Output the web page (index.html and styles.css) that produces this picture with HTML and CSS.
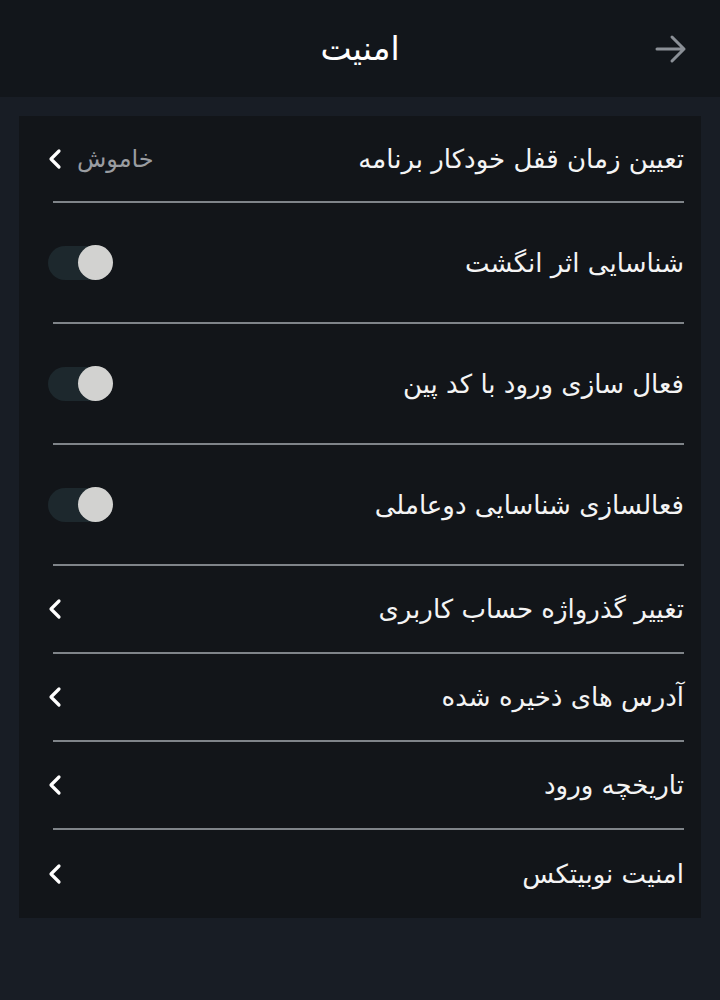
FILE: index.html
```html
<!DOCTYPE html>
<html lang="fa" dir="rtl">
<head>
<meta charset="utf-8">
<link rel="stylesheet" href="styles.css">
</head>
<body>
<header class="topbar">
  <h1 class="title">امنیت</h1>
  <span class="back">
    <svg width="32" height="30" viewBox="0 0 32 30"><path d="M2 15H29M17 3L29 15L17 27" fill="none" stroke="#8b9097" stroke-width="3" stroke-linecap="round" stroke-linejoin="round"/></svg>
  </span>
</header>
<main class="content">
  <section class="card">
    <div class="row nav">
      <span class="label">تعیین زمان قفل خودکار برنامه</span>
      <span class="end"><span class="value">خاموش</span><span class="chev"><svg width="14" height="22" viewBox="0 0 14 22"><path d="M11 3L3 11L11 19" fill="none" stroke="#fff" stroke-width="3.2" stroke-linecap="round" stroke-linejoin="round"/></svg></span></span>
    </div>
    <div class="row tall">
      <span class="label">شناسایی اثر انگشت</span>
      <span class="toggle"><span class="knob"></span></span>
    </div>
    <div class="row tall">
      <span class="label">فعال سازی ورود با کد پین</span>
      <span class="toggle"><span class="knob"></span></span>
    </div>
    <div class="row tall">
      <span class="label">فعالسازی شناسایی دوعاملی</span>
      <span class="toggle"><span class="knob"></span></span>
    </div>
    <div class="row nav">
      <span class="label">تغییر گذرواژه حساب کاربری</span>
      <span class="chev"><svg width="14" height="22" viewBox="0 0 14 22"><path d="M11 3L3 11L11 19" fill="none" stroke="#fff" stroke-width="3.2" stroke-linecap="round" stroke-linejoin="round"/></svg></span>
    </div>
    <div class="row nav">
      <span class="label">آدرس های ذخیره شده</span>
      <span class="chev"><svg width="14" height="22" viewBox="0 0 14 22"><path d="M11 3L3 11L11 19" fill="none" stroke="#fff" stroke-width="3.2" stroke-linecap="round" stroke-linejoin="round"/></svg></span>
    </div>
    <div class="row nav">
      <span class="label">تاریخچه ورود</span>
      <span class="chev"><svg width="14" height="22" viewBox="0 0 14 22"><path d="M11 3L3 11L11 19" fill="none" stroke="#fff" stroke-width="3.2" stroke-linecap="round" stroke-linejoin="round"/></svg></span>
    </div>
    <div class="row nav last">
      <span class="label">امنیت نوبیتکس</span>
      <span class="chev"><svg width="14" height="22" viewBox="0 0 14 22"><path d="M11 3L3 11L11 19" fill="none" stroke="#fff" stroke-width="3.2" stroke-linecap="round" stroke-linejoin="round"/></svg></span>
    </div>
  </section>
</main>
</body>
</html>
```

FILE: styles.css
```css
html, body {
  margin: 0;
  padding: 0;
  background: #181d25;
  height: 100%;
}
body {
  font-family: "DejaVu Sans", "Noto Sans", sans-serif;
  color: #f2f2f2;
  width: 720px;
  min-height: 1000px;
}
.topbar {
  height: 97px;
  background: #12161b;
  display: flex;
  align-items: center;
  justify-content: center;
  position: relative;
}
.title {
  margin: 0;
  font-size: 33px;
  font-weight: normal;
  color: #ffffff;
}
.back {
  position: absolute;
  right: 33px;
  top: 34px;
  display: flex;
}
.content {
  padding: 19px 19px 0 19px;
}
.card {
  background: #121519;
  display: flex;
  flex-direction: column;
}
.row {
  display: flex;
  align-items: center;
  justify-content: space-between;
  margin: 0 17px 0 34px;
  border-bottom: 2px solid #7f8489;
  box-sizing: border-box;
}
.row.last {
  border-bottom: none;
}
.row.nav {
  height: 88px;
}
.row.tall {
  height: 121px;
}
.row:first-child {
  height: 87px;
}
.label {
  font-size: 26px;
  color: #f4f4f4;
  white-space: nowrap;
}
.end {
  display: flex;
  align-items: center;
  gap: 15px;
}
.value {
  font-size: 24px;
  color: #9a9da1;
}
.chev {
  display: flex;
  margin-left: -5px;
}
.toggle {
  width: 64px;
  height: 34px;
  border-radius: 17px;
  background: #1d282d;
  margin-left: -5px;
  position: relative;
  display: block;
}
.knob {
  position: absolute;
  top: -1px;
  left: 30px;
  width: 35px;
  height: 35px;
  border-radius: 50%;
  background: #d2d2d0;
}
```
